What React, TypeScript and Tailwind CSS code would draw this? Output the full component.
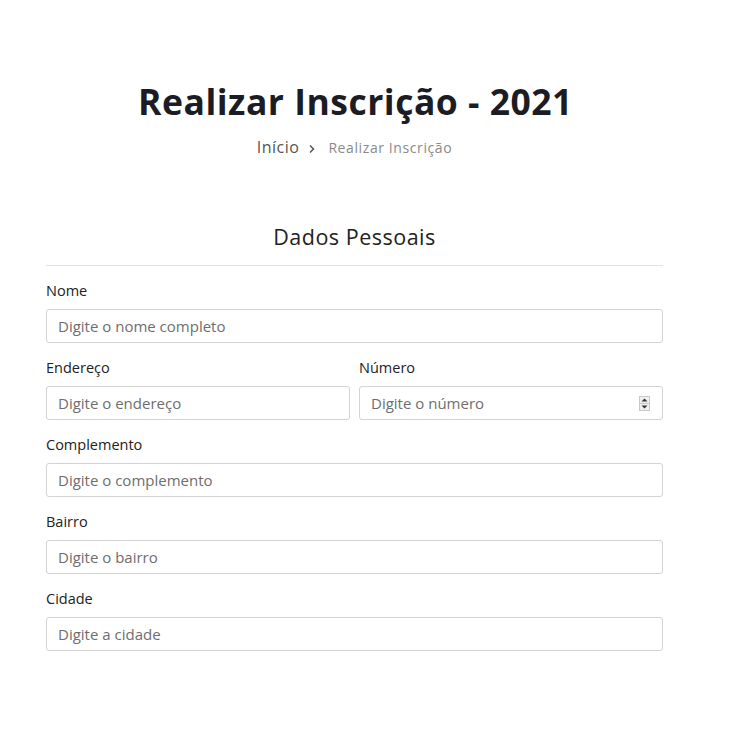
import React from "react";

const font = { fontFamily: '"Open Sans", "Liberation Sans", sans-serif' };

function Field({ label, placeholder, spinner = false }: { label: string; placeholder: string; spinner?: boolean }) {
  return (
    <div className="flex flex-col">
      <label className="h-[18px] text-[14.5px] leading-[18px] text-[#222]">{label}</label>
      <div className="relative mt-[9px]">
        <input
          type="text"
          placeholder={placeholder}
          className="h-[34px] w-full rounded-[3px] border border-[#d3d3d3] bg-white px-[11px] text-[15px] text-[#333] outline-none placeholder:text-[#6e6e6e]"
          style={font}
        />
        {spinner && (
          <div className="absolute right-[13px] top-[10px] flex h-[15px] w-[11px] flex-col border border-[#c8c8c8] bg-[#f0f0f0]">
            <div className="flex flex-1 items-center justify-center border-b border-[#c8c8c8]">
              <svg width="7" height="4" viewBox="0 0 7 4">
                <path d="M0.5 3.5 L3.5 0.5 L6.5 3.5 Z" fill="#333" />
              </svg>
            </div>
            <div className="flex flex-1 items-center justify-center">
              <svg width="7" height="4" viewBox="0 0 7 4">
                <path d="M0.5 0.5 L3.5 3.5 L6.5 0.5 Z" fill="#333" />
              </svg>
            </div>
          </div>
        )}
      </div>
    </div>
  );
}

export default function App() {
  return (
    <div className="min-h-[730px] w-[731px] bg-white" style={font}>
      <div className="ml-[46px] w-[617px] pt-[79px]">
        <h1 className="ml-[2px] text-center text-[35.5px] font-bold leading-[44px] tracking-[0.5px] text-[#1c1c24]">
          Realizar Inscrição - 2021
        </h1>
        <div className="mt-[12px] flex items-center justify-center">
          <span className="text-[16px] tracking-[0.5px] text-[#555]">Início</span>
          <svg width="8" height="10" viewBox="0 0 8 10" className="ml-[9px] mr-[12px] mt-[3px]">
            <path d="M2 1.5 L5.5 5 L2 8.5" stroke="#555" strokeWidth="1.5" fill="none" />
          </svg>
          <span className="text-[14px] tracking-[0.6px] text-[#8a8a8a]">Realizar Inscrição</span>
        </div>
        <h2 className="mt-[63px] text-center text-[21.5px] font-normal leading-[30px] tracking-[0.5px] text-[#222]">
          Dados Pessoais
        </h2>
        <div className="mt-[13px] border-t border-[#e3e3e3]" />
        <div className="mt-[16px] flex flex-col gap-[16px]">
          <Field label="Nome" placeholder="Digite o nome completo" />
          <div className="grid grid-cols-2 gap-[9px]">
            <Field label="Endereço" placeholder="Digite o endereço" />
            <Field label="Número" placeholder="Digite o número" spinner />
          </div>
          <Field label="Complemento" placeholder="Digite o complemento" />
          <Field label="Bairro" placeholder="Digite o bairro" />
          <Field label="Cidade" placeholder="Digite a cidade" />
        </div>
      </div>
    </div>
  );
}
